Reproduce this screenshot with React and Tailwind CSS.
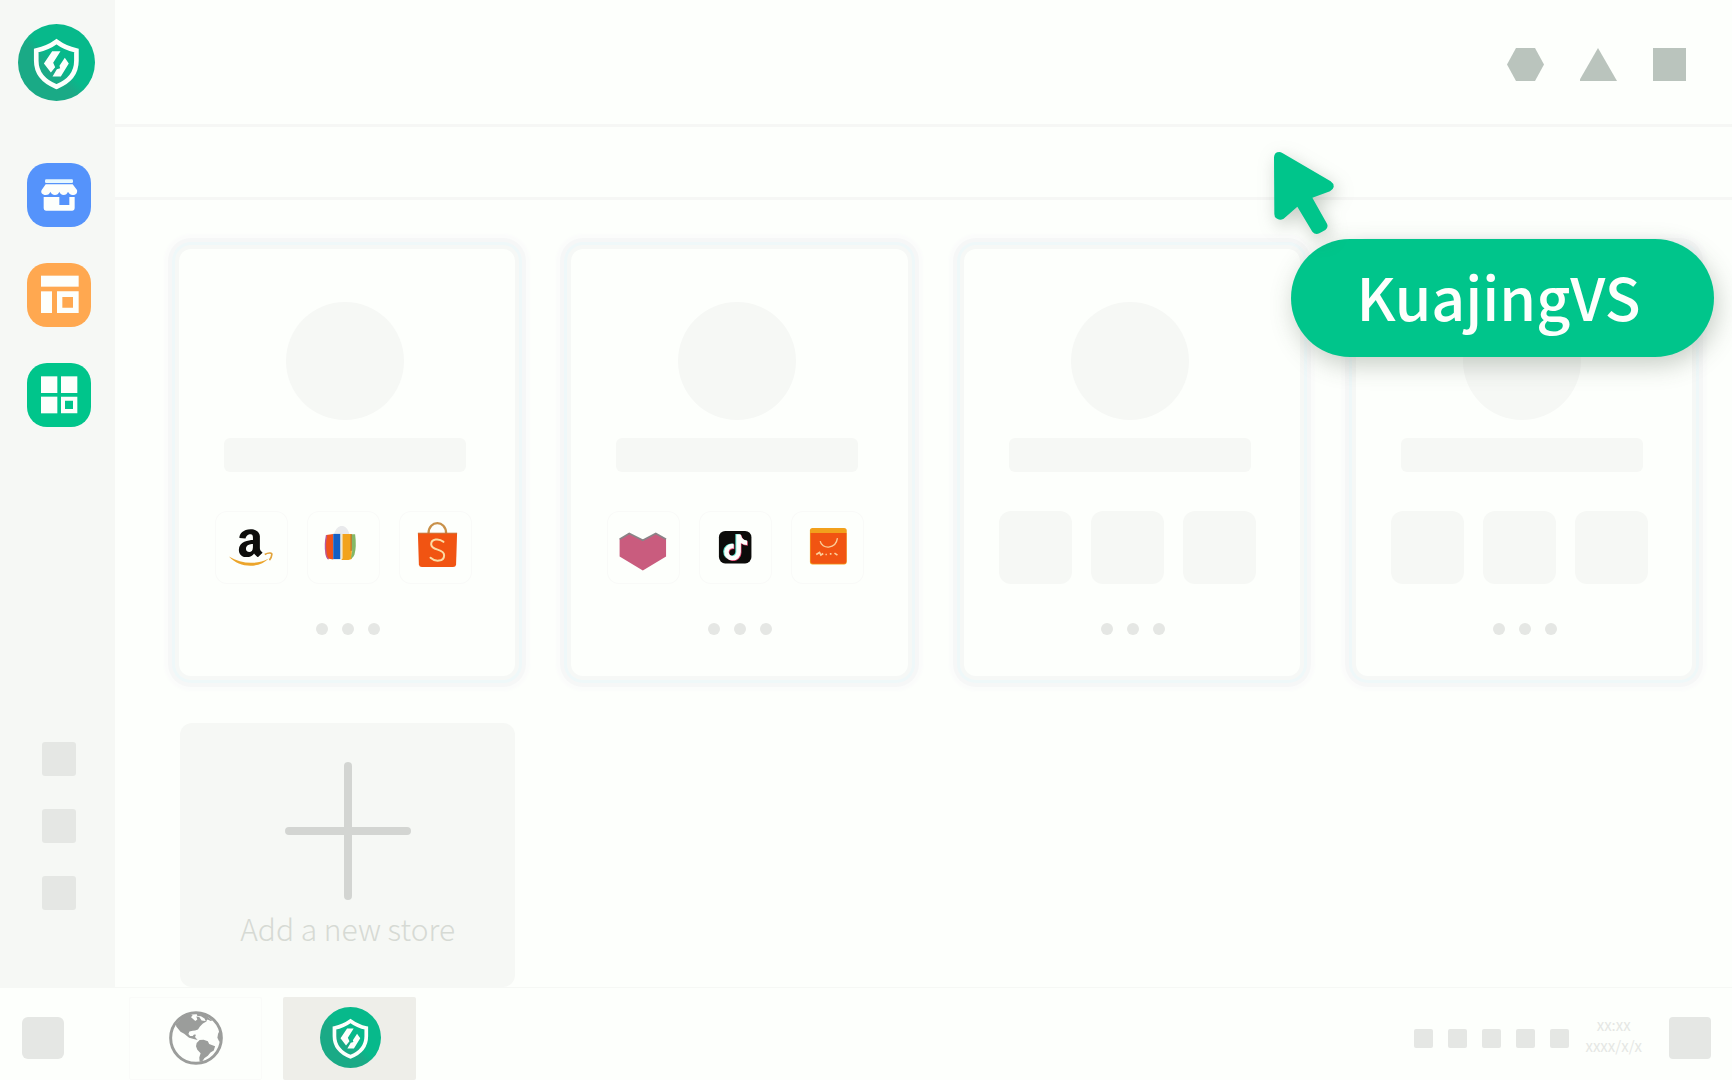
import { FaAmazon, FaTiktok } from 'react-icons/fa'

const FONT = "font-['Noto_Sans_CJK_SC',sans-serif]"

/* ---------- Brand + navigation icons ---------- */

function ShieldLogo({ id, className }) {
  return (
    <svg viewBox="54 71 232 232" className={className} aria-hidden="true">
      <defs>
        <linearGradient id={id} x1="0" y1="1" x2="1" y2="0">
          <stop offset="0.42" stopColor="#1aaa86" />
          <stop offset="0.52" stopColor="#07b98b" />
        </linearGradient>
      </defs>
      <circle cx="170" cy="187" r="116" fill={`url(#${id})`} />
      <path
        d="M170 124C151 138 131 146 109 151V182C109 225 140 248 170 260C200 248 230 225 230 182V151C208 146 189 138 170 124Z"
        fill="none" stroke="#fdfffc" strokeWidth="14"
      />
      <path d="M157 153H182L160 188L166 201L153 217L132 190Z" fill="#fdfffc" />
      <path d="M195 173L207 190L183 229H158L171 207L181 204L179 197Z" fill="#fdfffc" />
    </svg>
  )
}

function ShopIcon() {
  return (
    <svg viewBox="81 489 192 192" fill="#fdfffc" className="size-16" aria-hidden="true">
      <rect x="135" y="538" width="84" height="11" rx="4" fill="#e6f8ff" />
      <path d="M137 553H218L231 570C233 579 228 585 218 585C211 585 207 580 204 575C202 581 197 585 191 585C184 585 180 580 178 575C176 581 171 585 165 585C158 585 153 580 151 575C149 581 145 585 137 585C127 585 121 578 125 570Z" />
      <path d="M131 591H178V615H208V591H224V625Q224 632 217 632H138Q131 632 131 625Z" />
    </svg>
  )
}

function LayoutIcon() {
  return (
    <svg viewBox="81 69 192 192" fill="#fdfffc" className="size-16" aria-hidden="true">
      <rect x="123" y="107" width="113" height="33" />
      <rect x="123" y="154" width="33" height="65" />
      <path fillRule="evenodd" d="M171 154H236V219H171ZM187 171V203H219V171Z" />
    </svg>
  )
}

function GridIcon() {
  return (
    <svg viewBox="81 369 192 192" fill="#fdfffc" className="size-16" aria-hidden="true">
      <rect x="123" y="409" width="49" height="50" />
      <rect x="183" y="409" width="49" height="50" />
      <rect x="123" y="470" width="49" height="50" />
      <path fillRule="evenodd" d="M183 470H232V520H183ZM195 482V507H219V482Z" />
    </svg>
  )
}

function GlobeIcon() {
  return (
    <svg viewBox="506 121 164 164" fill="#9b9d9b" className="size-[54px]" aria-hidden="true">
      <circle cx="588" cy="203" r="77" fill="none" stroke="#9b9d9b" strokeWidth="9" />
      <path d="M527 161L545 141L567 130L578 133L573 140L586 151L592 147L589 138L598 139L605 150L621 152L609 159L600 168L594 177L585 180L578 181L568 183L565 191L570 197L578 197L582 192L588 193L585 200L593 209L581 206L567 202L552 190L541 184L528 168Z" />
      <path d="M590 218L599 209L611 208L624 213L628 221L646 228L642 241L632 247L624 257L614 264L606 275L599 275L598 262L602 249L592 239L588 228Z" />
      <path d="M590 128L617 134L637 150L633 151L623 147L618 153L614 144L603 137L592 136Z" />
      <path d="M661 178L655 190L653 202L658 213L665 216Z" />
    </svg>
  )
}

/* ---------- Marketplace icons ---------- */

function AmazonMark() {
  return (
    <svg viewBox="70 93 220 220" className="size-full" aria-hidden="true">
      <defs>
        <clipPath id="amazon-top"><rect x="110" y="130" width="105" height="102" /></clipPath>
      </defs>
      <g clipPath="url(#amazon-top)">
        <FaAmazon x="112" y="140" size="128" color="#0d0d0b" />
      </g>
      <path d="M112 230C150 253 195 256 232 236C205 265 145 267 112 230Z" fill="#eca52b" />
      <path d="M220 224C232 217 244 219 241 225Q240 235 234 241" fill="none" stroke="#e2a33b" strokeWidth="5" />
    </svg>
  )
}

function EbayMark() {
  return (
    <svg viewBox="345 93 220 220" className="size-full" aria-hidden="true">
      <path d="M426 163C432 145 440 138 450 138C460 138 468 145 473 163Z" fill="#e9eaec" />
      <path d="M403 165L424 162V239L407 236Q400 228 401 210Z" fill="#f0531c" />
      <path d="M404 166Q398 195 402 218Q403 233 410 238" fill="none" stroke="#b9579c" strokeWidth="4" />
      <path d="M424 162H446V238H424Z" fill="#155fc4" />
      <path d="M446 162H452V238H446Z" fill="#f0e8d0" />
      <path d="M452 162H480V238L470 241H448L452 236Z" fill="#f2a31c" />
      <path d="M479 163H490Q495 200 488 225Q484 235 477 238L481 215Z" fill="#84b866" />
      <path d="M478 163V213" stroke="#a9642a" strokeWidth="3" />
    </svg>
  )
}

function ShopeeMark() {
  return (
    <svg viewBox="622 93 220 220" className="size-full" aria-hidden="true">
      <path d="M711 161C711 119 764 119 764 161" fill="none" stroke="#c8914a" strokeWidth="7" />
      <path d="M679 160H797L794 255Q793 262 785 262H691Q683 262 682 255Z" fill="#f15412" />
      <path d="M679 160H797" stroke="#c96a2a" strokeWidth="3" />
      <path
        d="M756 186C742 174 719 177 719 193C719 214 758 205 758 226C758 246 731 247 717 234"
        fill="none" stroke="#fbdca4" strokeWidth="6" strokeLinecap="round"
      />
    </svg>
  )
}

function HeartMark() {
  return (
    <svg viewBox="46 63 220 220" className="size-full" aria-hidden="true">
      <path d="M84 148L113 131L154 152L193 131L224 148V200L154 242L84 200Z" fill="#c95c7e" />
      <path d="M84 148L113 131L154 151L193 131L224 148" fill="none" stroke="#8a8387" strokeWidth="5" />
    </svg>
  )
}

function TiktokMark() {
  return (
    <svg viewBox="323 63 220 220" className="size-full" aria-hidden="true">
      <rect x="383" y="123" width="98" height="98" rx="19" fill="#0c0c0a" />
      <FaTiktok x="391" y="132" size="79" color="#5fe3cf" />
      <FaTiktok x="396" y="135" size="79" color="#e0406c" />
      <FaTiktok x="394" y="133" size="79" color="#fdfffc" />
    </svg>
  )
}

function AliexpressMark() {
  return (
    <svg viewBox="600 63 220 220" className="size-full" aria-hidden="true">
      <rect x="657" y="114" width="111" height="110" rx="8" fill="#f2a01c" />
      <path d="M659 129H767V214Q767 222 759 222H667Q659 222 659 214Z" fill="#f15412" />
      <path d="M688 154C692 178 735 180 740 145" fill="none" stroke="#fbcf9a" strokeWidth="4" />
      <path d="M676 194L686 188L690 196L697 191M704 194H708M717 192H722M731 190L740 196" fill="none" stroke="#fbcf9a" strokeWidth="5" />
    </svg>
  )
}

/* ---------- Data ---------- */

const NAV = [
  { label: 'Stores', Icon: ShopIcon, bg: 'bg-[#5593fb]' },
  { label: 'Layouts', Icon: LayoutIcon, bg: 'bg-[#ffa850]' },
  { label: 'Apps', Icon: GridIcon, bg: 'bg-[#00c58b]' },
]

const STORES = [
  { id: 1, marks: [AmazonMark, EbayMark, ShopeeMark] },
  { id: 2, marks: [HeartMark, TiktokMark, AliexpressMark] },
  { id: 3, marks: [null, null, null] },
  { id: 4, marks: [null, null, null] },
]

/* ---------- Sections ---------- */

function Sidebar() {
  return (
    <aside className="flex w-[115px] shrink-0 flex-col items-center bg-[#f6f8f5] pt-6 pr-0.5 pb-[77px]">
      <ShieldLogo id="logo-side" className="size-[77px]" />
      <nav className="mt-[62px] flex flex-col gap-9 pl-1">
        {NAV.map(({ label, Icon, bg }) => (
          <button key={label} aria-label={label} className={`size-16 rounded-[20px] ${bg}`}>
            <Icon />
          </button>
        ))}
      </nav>
      <div className="mt-auto flex flex-col gap-[33px] pl-1">
        {[0, 1, 2].map((i) => (
          <div key={i} className="size-[34px] rounded-[3px] bg-[#e5e7e4]" />
        ))}
      </div>
    </aside>
  )
}

function TopBar() {
  return (
    <header className="flex h-[127px] items-center justify-end gap-9 border-b-3 border-[#f6f7f5] pt-1 pr-[46px]">
      <svg viewBox="0 0 37 33" fill="#bac4bd" className="h-[33px] w-[37px]" aria-hidden="true">
        <path d="M9 0H28L37 16.5L28 33H9L0 16.5Z" />
      </svg>
      <svg viewBox="0 0 37 33" fill="#bac4bd" className="h-[33px] w-[37px]" aria-hidden="true">
        <path d="M18 0L37 33H-1Z" />
      </svg>
      <div className="size-[33px] bg-[#bac4bd]" />
    </header>
  )
}

function StoreCard({ marks }) {
  return (
    <article className="flex flex-col items-center rounded-xl bg-[#fdfffc] pt-[53px] pr-1 pb-[41px] shadow-[0_0_0_4px_#f6f8f6,0_0_0_7px_#eff8f9,0_0_0_11px_#f6f7f7,0_0_3px_15px_#fbfcfb]">
      <div className="size-[118px] rounded-full bg-[#f6f8f5]" />
      <div className="mt-[18px] h-[34px] w-[242px] rounded-md bg-[#f6f8f5]" />
      <div className="mt-[39px] flex gap-[19px] pr-1">
        {marks.map((Mark, i) => (
          <div
            key={i}
            className={`size-[73px] rounded-xl ${Mark ? 'inset-ring inset-ring-[#f9faf8]' : 'bg-[#f6f8f5]'}`}
          >
            {Mark && <Mark />}
          </div>
        ))}
      </div>
      <div className="mt-[39px] flex gap-3.5 pl-1.5">
        {[0, 1, 2].map((i) => (
          <span key={i} className="size-3 rounded-full bg-[#e5e7e4]" />
        ))}
      </div>
    </article>
  )
}

function AddStore() {
  return (
    <button className="ml-px flex h-[264px] flex-col items-center rounded-xl bg-[#f6f8f5] pt-[39px]">
      <svg viewBox="0 0 126 138" className="h-[138px] w-[126px]" aria-hidden="true">
        <path d="M63 4V134M4 69H122" stroke="#d3d5d2" strokeWidth="8" strokeLinecap="round" />
      </svg>
      <span className="mt-1.5 text-[30px] leading-[44px] font-light text-[#d6dad4]">Add a new store</span>
    </button>
  )
}

function Taskbar() {
  return (
    <footer className="flex h-[93px] shrink-0 items-center border-t border-[#f6f8f5] bg-[#fdfffc] pt-2 pr-[21px] pl-[22px]">
      <button aria-label="Start" className="size-[42px] rounded-md bg-[#e5e7e4]" />
      <button
        aria-label="Browser"
        className="ml-[65px] flex h-[83px] w-[133px] items-center justify-center rounded-xs border border-[#fafbf9]"
      >
        <GlobeIcon />
      </button>
      <button
        aria-label="KuajingVS"
        className="ml-[21px] flex h-[83px] w-[133px] items-center justify-center rounded-xs bg-[#eeeee9] pb-0.5 pl-0.5"
      >
        <ShieldLogo id="logo-task" className="size-[61px]" />
      </button>
      <div className="ml-auto flex items-center">
        <div className="flex gap-[15px]">
          {[0, 1, 2, 3, 4].map((i) => (
            <span key={i} className="size-[19px] rounded-xs bg-[#e5e7e4]" />
          ))}
        </div>
        <div className="ml-4 pb-1.5 text-center text-[15px] leading-[21px] text-[#e5e7e4]">
          <p>xx:xx</p>
          <p>xxxx/x/x</p>
        </div>
        <div className="ml-[27px] size-[42px] rounded-sm bg-[#e5e7e4]" />
      </div>
    </footer>
  )
}

function PointerLabel() {
  return (
    <div className="pointer-events-none absolute top-[152px] right-[18px]">
      <svg
        viewBox="72 66 180 249"
        fill="#00c58b"
        className="h-[83px] w-[60px] overflow-visible drop-shadow-[3px_6px_9px_rgba(60,80,60,0.28)]"
        aria-hidden="true"
      >
        <path d="M72 82Q73 66 88 66Q92 66 97 69L242 154Q252 161 251 171Q249 179 240 184L187 203L231 281Q236 292 226 300L208 310Q196 316 187 305L142 230L101 266Q89 273 79 265Q73 261 73 252Z" />
      </svg>
      <div className="mt-1 ml-[17px] flex h-[118px] w-[423px] items-center justify-center rounded-full bg-[#00c58b] pr-2 pb-1.5 text-[59px] leading-none font-medium text-[#fdfffc] shadow-[3px_8px_24px_rgba(60,80,60,0.28)]">
        KuajingVS
      </div>
    </div>
  )
}

export default function App() {
  return (
    <div className={`relative flex min-h-screen flex-col bg-[#fdfffc] ${FONT}`}>
      <div className="flex flex-1">
        <Sidebar />
        <div className="min-w-0 flex-1">
          <TopBar />
          <div className="h-[73px] border-b-3 border-[#f6f7f5]" />
          <main className="grid grid-cols-4 gap-x-14 gap-y-[47px] pt-[49px] pr-10 pl-16">
            {STORES.map((store) => (
              <StoreCard key={store.id} marks={store.marks} />
            ))}
            <AddStore />
          </main>
        </div>
      </div>
      <Taskbar />
      <PointerLabel />
    </div>
  )
}
